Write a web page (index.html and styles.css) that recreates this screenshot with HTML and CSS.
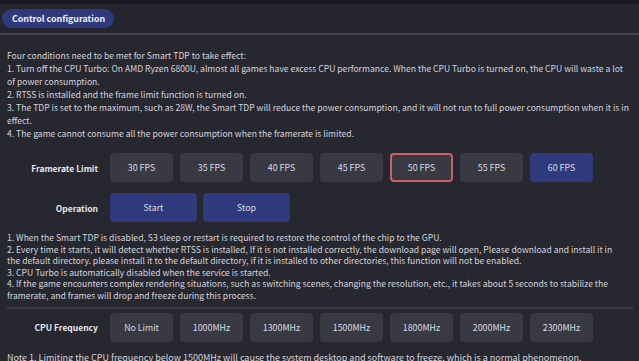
FILE: index.html
```html
<!DOCTYPE html>
<html lang="en">
<head>
<meta charset="utf-8">
<title>Control configuration</title>
<link rel="stylesheet" href="styles.css">
</head>
<body>
<div class="topbar"></div>
<header class="header">
  <span class="pill">Control configuration</span>
</header>
<div class="divider full"></div>
<main class="content">
  <div class="intro">
    <div>Four conditions need to be met for Smart TDP to take effect:</div>
    <div>1. Turn off the CPU Turbo: On AMD Ryzen 6800U, almost all games have excess CPU performance. When the CPU Turbo is turned on, the CPU will waste a lot<br>of power consumption.</div>
    <div>2. RTSS is installed and the frame limit function is turned on.</div>
    <div>3. The TDP is set to the maximum, such as 28W, the Smart TDP will reduce the power consumption, and it will not run to full power consumption when it is in effect.</div>
    <div>4. The game cannot consume all the power consumption when the framerate is limited.</div>
  </div>
  <div class="row fps-row">
    <div class="label">Framerate Limit</div>
    <div class="opts">
      <button class="btn">30 FPS</button>
      <button class="btn">35 FPS</button>
      <button class="btn">40 FPS</button>
      <button class="btn">45 FPS</button>
      <button class="btn hover">50 FPS</button>
      <button class="btn">55 FPS</button>
      <button class="btn active">60 FPS</button>
    </div>
  </div>
  <div class="row op-row">
    <div class="label">Operation</div>
    <div class="opts">
      <button class="btn wide active">Start</button>
      <button class="btn wide active">Stop</button>
    </div>
  </div>
  <div class="notes">
    <div>1. When the Smart TDP is disabled, S3 sleep or restart is required to restore the control of the chip to the GPU.</div>
    <div>2. Every time it starts, it will detect whether RTSS is installed, If it is not installed correctly, the download page will open, Please download and install it in the default directory. please install it to the default directory, if it is installed to other directories, this function will not be enabled.</div>
    <div>3. CPU Turbo is automatically disabled when the service is started.</div>
    <div>4. If the game encounters complex rendering situations, such as switching scenes, changing the resolution, etc., it takes about 5 seconds to stabilize the framerate, and frames will drop and freeze during this process.</div>
  </div>
  <div class="divider inner"></div>
  <div class="row cpu-row">
    <div class="label">CPU Frequency</div>
    <div class="opts">
      <button class="btn">No Limit</button>
      <button class="btn">1000MHz</button>
      <button class="btn">1300MHz</button>
      <button class="btn">1500MHz</button>
      <button class="btn">1800MHz</button>
      <button class="btn">2000MHz</button>
      <button class="btn">2300MHz</button>
    </div>
  </div>
  <div class="note">Note 1. Limiting the CPU frequency below 1500MHz will cause the system desktop and software to freeze, which is a normal phenomenon.</div>
</main>
</body>
</html>
```

FILE: styles.css
```css
html, body {
  margin: 0;
  padding: 0;
  background: #27272f;
  color: #d4d4dc;
  font-family: "Noto Sans CJK SC", "Noto Sans", sans-serif;
  font-size: 8.6px;
  overflow: hidden;
  height: 361px;
}
.topbar {
  height: 4px;
  background: #1b1b24;
}
.header {
  height: 29px;
  display: flex;
  align-items: center;
  padding-left: 2px;
  background: #25252f;
}
.pill {
  display: inline-flex;
  align-items: center;
  height: 19px;
  padding: 0 9px 0 10px;
  border-radius: 10px;
  background: #2f3a7c;
  color: #f0f0f6;
  font-weight: 700;
  font-size: 8.8px;
}
.divider {
  height: 2px;
  background: #464654;
}
.content {
  padding: 0 4px 0 7px;
}
.intro {
  margin-top: 14px;
  line-height: 13px;
}
.notes {
  margin-top: 10px;
  margin-right: 11px;
  line-height: 11.6px;
}
.note {
  margin-top: 9px;
  line-height: 13px;
  font-size: 9px;
  white-space: nowrap;
}
.row {
  display: flex;
  align-items: center;
}
.fps-row { margin-top: 13px; }
.op-row { margin-top: 11px; }
.cpu-row { margin-top: 4px; }
.divider.inner {
  margin-top: 5px;
  margin-right: 2px;
  height: 2px;
  background: #3c3c48;
}
.label {
  width: 91px;
  text-align: right;
  font-weight: 700;
  font-size: 8.5px;
  color: #e6e6ee;
  margin-right: 12px;
}
.opts {
  display: flex;
  gap: 7px;
}
.btn {
  width: 63px;
  height: 29px;
  border: 0;
  border-radius: 4px;
  background: #393944;
  color: #dadae2;
  font-family: inherit;
  font-size: 8.8px;
  padding: 0;
}
.btn.wide {
  width: 87px;
}
.op-row .opts { gap: 6px; }
.btn.active {
  background: #2f3a7c;
}
.btn.hover {
  border: 2px solid #c9606a;
}
```
